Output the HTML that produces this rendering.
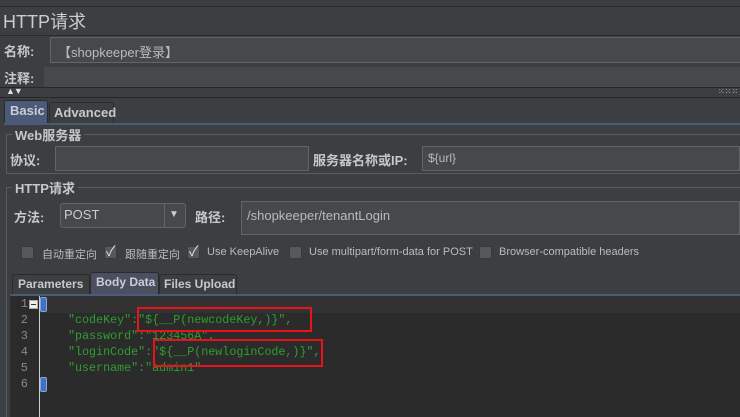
<!DOCTYPE html><html><head><meta charset="utf-8"><style>
*{margin:0;padding:0;box-sizing:border-box}
html{width:740px;height:417px;overflow:hidden}
body{width:740px;height:417px;overflow:hidden;background:#3c3f41;font-family:"Liberation Sans","Noto Sans CJK SC",sans-serif;color:#bbbbbb;position:relative;font-size:12px}
.a{position:absolute}
.in{position:absolute;background:#45494a;border:1px solid #646464}
.hl{position:absolute;height:1px;background:#2b2b2b}
.lbl{position:absolute;font-weight:bold;font-size:13px;color:#c8c8c8}
.cb{position:absolute;width:13px;height:13px;background:#56595b;border:1px solid #3a3a3a;border-radius:2px;top:246px}
.ct{position:absolute;top:246px;font-size:11px;color:#bbb}
.ck{position:absolute;top:241px;font-size:14px;color:#ddd}
.code{position:absolute;font-family:"Liberation Mono",monospace;font-size:11.7px;color:#2f9e2f;white-space:pre}
.ln{position:absolute;left:12px;width:16px;text-align:right;font-family:"Liberation Mono",monospace;font-size:12px;color:#888}
.rb{position:absolute;border:2px solid #e8131a}
</style></head><body>
<div class="hl" style="top:6px;left:0;width:740px"></div>
<div class="a" style="left:3px;top:8px;font-size:18px;color:#ccc">HTTP请求</div>
<div class="hl" style="top:35px;left:0;width:740px"></div>
<div class="lbl" style="left:4px;top:41px">名称:</div>
<div class="in" style="left:50px;top:37px;width:700px;height:26px"></div>
<div class="a" style="left:58px;top:42px;font-size:13px;color:#bbb">【shopkeeper登录】</div>
<div class="lbl" style="left:4px;top:68px">注释:</div>
<div class="a" style="left:44px;top:67px;width:700px;height:20px;background:#45494a"></div>
<div class="hl" style="top:87px;left:0;width:740px;background:#262626"></div>
<div class="a" style="left:6px;top:86px;font-size:9px;color:#ddd;letter-spacing:-1px">▲▼</div>
<div class="a" style="left:718px;top:87px;font-size:8px;color:#ccc">⁙⁙⁙</div>
<div class="hl" style="top:97px;left:0;width:740px;background:#262626"></div>
<div class="a" style="left:4px;top:100px;width:44px;height:24px;background:#4a5a78;border:1px solid #2b2b2b;border-bottom:none;border-radius:3px 3px 0 0"></div>
<div class="a" style="left:10px;top:103px;font-size:13px;font-weight:bold;color:#c8cdd8">Basic</div>
<div class="a" style="left:49px;top:102px;width:65px;height:22px;border:1px solid #2b2b2b;border-bottom:none;border-radius:3px 3px 0 0"></div>
<div class="a" style="left:54px;top:105px;font-size:13px;font-weight:bold;color:#c8c8c8">Advanced</div>
<div class="a" style="left:4px;top:123px;width:736px;height:2px;background:#4a5a78"></div>
<div class="a" style="left:6px;top:134px;width:734px;height:40px;border:1px solid #5a5d5f;border-right:none"></div>
<div class="a" style="left:12px;top:125px;padding:0 3px;background:#3c3f41;font-size:13px;font-weight:bold;color:#c8c8c8">Web服务器</div>
<div class="lbl" style="left:10px;top:150px">协议:</div>
<div class="in" style="left:55px;top:146px;width:254px;height:25px"></div>
<div class="lbl" style="left:313px;top:150px">服务器名称或IP:</div>
<div class="in" style="left:422px;top:146px;width:318px;height:25px"></div>
<div class="a" style="left:428px;top:151px;font-size:12px">${url}</div>
<div class="a" style="left:6px;top:187px;width:734px;height:230px;border-left:1px solid #5a5d5f;border-top:1px solid #5a5d5f"></div>
<div class="a" style="left:12px;top:178px;padding:0 3px;background:#3c3f41;font-size:13px;font-weight:bold;color:#c8c8c8">HTTP请求</div>
<div class="lbl" style="left:14px;top:207px">方法:</div>
<div class="in" style="left:60px;top:203px;width:126px;height:25px;border-radius:3px"></div>
<div class="a" style="left:164px;top:204px;width:1px;height:23px;background:#646464"></div>
<div class="a" style="left:169px;top:209px;font-size:10px;color:#ccc">▼</div>
<div class="a" style="left:64px;top:207px;font-size:13px;color:#ccc">POST</div>
<div class="lbl" style="left:195px;top:207px">路径:</div>
<div class="in" style="left:241px;top:201px;width:499px;height:34px"></div>
<div class="a" style="left:247px;top:208px;font-size:13px;color:#bbb">/shopkeeper/tenantLogin</div>
<div class="cb" style="left:21px"></div><div class="ct" style="left:42px">自动重定向</div>
<div class="cb" style="left:104px"></div><div class="ck" style="left:106px">✓</div><div class="ct" style="left:125px">跟随重定向</div>
<div class="cb" style="left:187px"></div><div class="ck" style="left:189px">✓</div><div class="ct" style="left:207px">Use KeepAlive</div>
<div class="cb" style="left:289px"></div><div class="ct" style="left:309px">Use multipart/form-data for POST</div>
<div class="cb" style="left:479px"></div><div class="ct" style="left:499px">Browser-compatible headers</div>
<div class="a" style="left:12px;top:274px;width:78px;height:21px;border:1px solid #2b2b2b;border-bottom:none;border-radius:3px 3px 0 0"></div>
<div class="a" style="left:18px;top:277px;font-size:12px;font-weight:bold;color:#c8c8c8">Parameters</div>
<div class="a" style="left:90px;top:272px;width:69px;height:23px;background:#4a5060;border:1px solid #2b2b2b;border-bottom:none;border-radius:3px 3px 0 0"></div>
<div class="a" style="left:96px;top:275px;font-size:12px;font-weight:bold;color:#c8cdd8">Body Data</div>
<div class="a" style="left:159px;top:274px;width:78px;height:21px;border:1px solid #2b2b2b;border-bottom:none;border-radius:3px 3px 0 0"></div>
<div class="a" style="left:164px;top:277px;font-size:12px;font-weight:bold;color:#c8c8c8">Files Upload</div>
<div class="a" style="left:10px;top:294px;width:730px;height:2px;background:#4a5a78"></div>
<div class="a" style="left:10px;top:296px;width:730px;height:121px;background:#2b2b2b"></div>
<div class="a" style="left:40px;top:296px;width:700px;height:17px;background:#323232"></div>
<div class="a" style="left:39px;top:296px;width:1px;height:121px;background:#cfcfcf"></div>
<div class="ln" style="top:297px">1</div><div class="ln" style="top:313px">2</div><div class="ln" style="top:329px">3</div><div class="ln" style="top:345px">4</div><div class="ln" style="top:361px">5</div><div class="ln" style="top:377px">6</div>
<div class="a" style="left:29px;top:300px;width:9px;height:9px;border:1px solid #aaa;background:#eee"><div style="margin:3px 1px;height:1px;background:#333"></div></div>
<div class="a" style="left:40px;top:297px;width:7px;height:15px;background:#3f6fd0;border:1px solid #8ab;border-radius:2px"></div>
<div class="a" style="left:40px;top:377px;width:7px;height:15px;background:#3f6fd0;border:1px solid #8ab;border-radius:2px"></div>
<div class="code" style="left:68px;top:313px">"codeKey":"${__P(newcodeKey,)}",</div>
<div class="code" style="left:68px;top:329px">"password":"123456A",</div>
<div class="code" style="left:68px;top:345px">"loginCode":"${__P(newloginCode,)}",</div>
<div class="code" style="left:68px;top:361px">"username":"admin1"</div>
<div class="rb" style="left:137px;top:307px;width:175px;height:25px"></div>
<div class="rb" style="left:153px;top:339px;width:170px;height:28px"></div>
</body></html>
